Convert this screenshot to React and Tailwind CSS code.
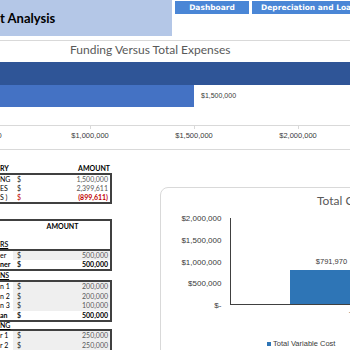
export default function App() {
  const arial = "font-['Liberation_Sans',Arial,sans-serif]";
  const Row = ({ label, num, bold, grey = true, red, tall }) => (
    <div className={`flex ${tall ? "h-[9.5px]" : "h-[9px]"} items-center text-[7px] leading-none ${bold ? "font-bold" : ""}`}>
      <div className="w-[13px] shrink-0 whitespace-nowrap overflow-hidden">{label}</div>
      <div className={`flex-1 h-full flex items-center ${grey ? "bg-[#efefef]" : ""}`}>
        <span className={`pl-[4px] ${red ? "text-[#c00000]" : "text-[#262626]"}`}>$</span>
        <span className={`ml-auto pr-[2px] ${red ? "text-[#c00000] font-bold" : bold ? "text-black" : "text-[#595959]"}`}>{num}</span>
      </div>
    </div>
  );
  const axisLabels = ["$500,000", "$1,000,000", "$1,500,000", "$2,000,000", "$2,500,000"];
  return (
    <div className="w-[350px] h-[350px] overflow-hidden bg-white font-['Lato',sans-serif] text-black">
      <div className="flex h-[36px]">
        <div className="w-[172px] shrink-0 bg-[#b4c7e7] flex items-center text-[13px] font-bold leading-none whitespace-nowrap">
          t Analysis
        </div>
        <div className="flex items-start gap-[3px] ml-[3px] pt-[1px] font-['DejaVu_Sans',Verdana,sans-serif]">
          <div className="w-[74px] shrink-0 h-[13px] bg-[#4a86d6] text-white text-[7.5px] font-bold flex items-center justify-center">
            Dashboard
          </div>
          <div className="w-[140px] shrink-0 h-[13px] bg-[#4a86d6] text-white text-[7.5px] font-bold flex items-center pl-[9px] whitespace-nowrap">
            Depreciation and Loan
          </div>
        </div>
      </div>

      <div className="mt-[4px] h-[110px] border-y border-[#d9d9d9] overflow-hidden">
        <div className="pt-[2px] pl-[70px] text-[12px] leading-[14px] text-[#595959] whitespace-nowrap">
          Funding Versus Total Expenses
        </div>
        <div className="mt-[5px] h-[23px] w-full bg-[#2f5597]" />
        <div className="flex items-center h-[22px]">
          <div className="w-[194px] h-full bg-[#4472c4]" />
          <span className={`ml-[7px] text-[7px] text-[#3a3a3a] ${arial}`}>$1,500,000</span>
        </div>
        <div className="mt-[18px] h-px bg-[#d9d9d9]" />
        <div className="flex ml-[-66px]">
          {axisLabels.map((l) => (
            <div key={l} className="w-[104px] shrink-0 flex flex-col items-center">
              <div className="w-px h-[3px] bg-[#d9d9d9]" />
              <div className={`mt-[2px] text-[7.5px] leading-[9px] text-[#3a3a3a] whitespace-nowrap ${arial}`}>{l}</div>
            </div>
          ))}
        </div>
      </div>

      <div className="flex">
        <div className="w-[112px] shrink-0">
          <div className="mt-[13px] h-[10px] flex items-center text-[7px] font-bold leading-none">
            <span>RY</span>
            <span className="ml-auto pr-[2px]">AMOUNT</span>
          </div>
          <div className="border-t-2 border-r-2 border-b-2 border-[#404040]">
            <Row label="NG" num="1,500,000" grey={false} />
            <Row label="ES" num="2,399,611" grey={false} />
            <Row label="S )" num="(899,611)" grey={false} red />
          </div>

          <div className="mt-[15px] border-t-2 border-r-2 border-[#404040]">
            <div className="h-[10px] flex items-center text-[7px] font-bold leading-none">
              <div className="w-[15px] shrink-0" />
              <div className="flex-1 text-center">AMOUNT</div>
            </div>
            <div className="h-[9px]" />
            <div className="h-[9px] flex items-center text-[7px] leading-none font-semibold">
              <span className="underline">RS</span>
            </div>
          </div>
          <div className="border-t-2 border-r-2 border-b-2 border-[#404040]">
            <Row label="er" num="500,000" />
            <Row label="ner" num="500,000" bold grey={false} />
          </div>
          <div className="h-[9px] flex items-center text-[7px] leading-none font-semibold">
            <span className="underline">NS</span>
          </div>
          <div className="border-t-2 border-r-2 border-b-2 border-[#404040]">
            <Row label="n 1" num="200,000" tall />
            <Row label="n 2" num="200,000" tall />
            <Row label="n 3" num="100,000" tall />
            <Row label="an" num="500,000" bold grey={false} tall />
          </div>
          <div className="h-[7px] flex items-center text-[7px] leading-none font-semibold">
            <span className="underline">NG</span>
          </div>
          <div className="border-t-2 border-r-2 border-b-2 border-[#404040]">
            <Row label="r 1" num="250,000" tall />
            <Row label="r 2" num="250,000" tall />
          </div>
        </div>

        <div className="ml-[48px] mt-[37px] w-[260px] h-[200px] shrink-0 rounded-[8px] border border-[#d9d9d9]">
          <div className="mt-[6px] ml-[156px] text-[12px] leading-[14px] text-[#595959] whitespace-nowrap">
            Total Costs
          </div>
          <div className={`mt-[6px] flex items-start ${arial}`}>
            <div className="ml-[19px] w-[44px] h-[96px] flex flex-col justify-between items-end text-[8px] leading-[9px] text-[#3a3a3a] whitespace-nowrap">
              <span>$2,000,000</span>
              <span>$1,500,000</span>
              <span>$1,000,000</span>
              <span>$500,000</span>
              <span>$-</span>
            </div>
            <div className="ml-[9px] mt-[4px] h-[87px] w-[200px] border-l border-b border-[#404040] flex items-end">
              <div className="ml-[59px] flex flex-col items-center">
                <span className="mb-[4px] text-[7.5px] leading-[9px] text-[#3a3a3a] whitespace-nowrap">$791,970</span>
                <div className="w-[82px] h-[34px] bg-[#2e75b6]" />
              </div>
            </div>
          </div>
          <div className={`ml-[188px] text-[7.5px] leading-[9px] text-[#3a3a3a] whitespace-nowrap ${arial}`}>
            Total Variable Cost
          </div>
          <div className={`mt-[20px] ml-[106px] flex items-center gap-[2px] text-[7.5px] leading-[9px] text-[#3a3a3a] whitespace-nowrap ${arial}`}>
            <div className="w-[4px] h-[4px] bg-[#2e75b6]" />
            <span>Total Variable Cost</span>
          </div>
        </div>
      </div>
    </div>
  );
}
